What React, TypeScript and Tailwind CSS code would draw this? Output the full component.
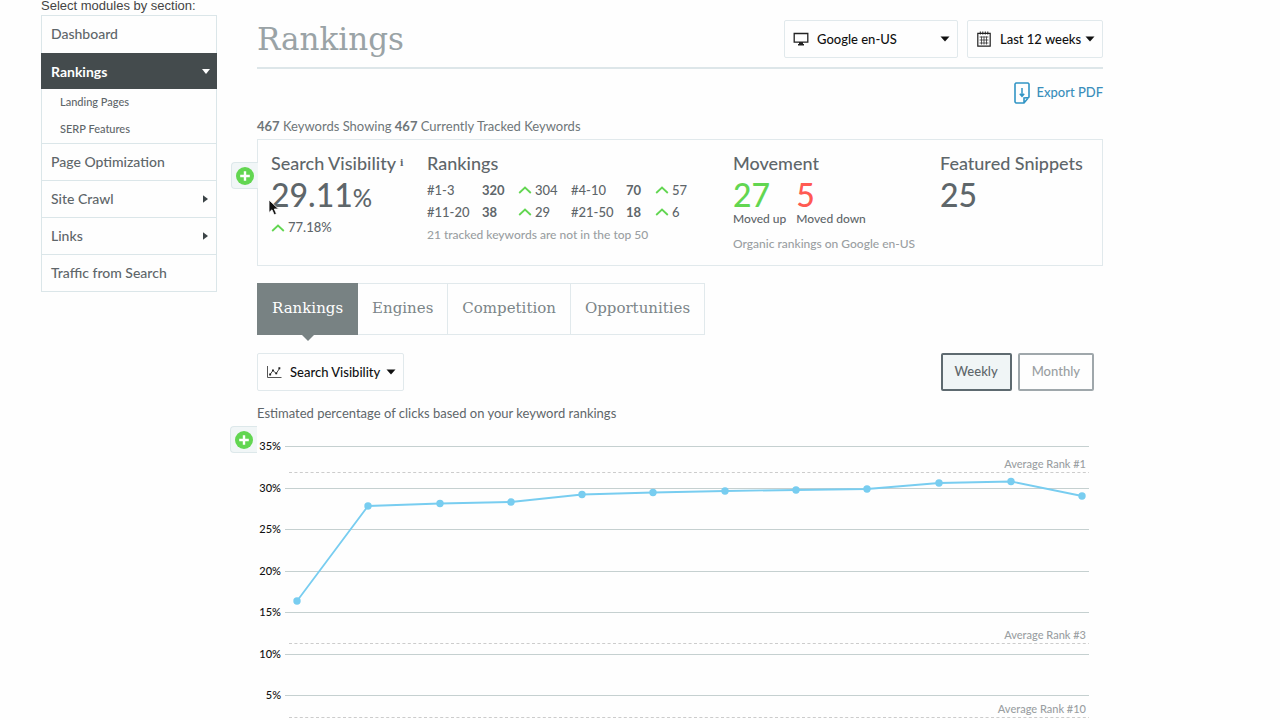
import type { ReactNode } from 'react';

const SLAB = "font-['Roboto_Slab','DejaVu_Serif',serif]";

const weeks = [
  [40, 171], [111, 76], [183, 73.5], [254, 72], [325, 64.5], [396, 62.5],
  [468, 61], [539, 60], [610, 59], [682, 53], [754, 51.5], [825, 66],
];

const gridLines = [
  { label: '35%', y: 17 },
  { label: '30%', y: 59 },
  { label: '25%', y: 100 },
  { label: '20%', y: 142 },
  { label: '15%', y: 183 },
  { label: '10%', y: 225 },
  { label: '5%', y: 266 },
];

const averages = [
  { label: 'Average Rank #1', y: 42 },
  { label: 'Average Rank #3', y: 213 },
  { label: 'Average Rank #10', y: 287 },
];

function Caret({ className = '' }: { className?: string }) {
  return (
    <svg viewBox="0 0 10 6" className={`h-[6px] w-[10px] ${className}`} aria-hidden="true">
      <path d="M0.5 0.5h9L5 5.5z" fill="#111" />
    </svg>
  );
}

function UpArrow() {
  return (
    <svg viewBox="0 0 14 8" className="h-2 w-[14px] shrink-0" aria-hidden="true">
      <path d="M1.2 7L7 1.6L12.8 7" fill="none" stroke="#62d651" strokeWidth="1.8" />
    </svg>
  );
}

function Change({ value }: { value: string }) {
  return (
    <span className="flex items-center gap-[3px]">
      <UpArrow />
      {value}
    </span>
  );
}

function AddModule({ className }: { className: string }) {
  return (
    <button
      type="button"
      aria-label="Add module"
      className={`absolute -left-[27px] flex h-[27px] w-[27px] items-center justify-center rounded-l-[4px] border border-r-0 border-[#dde8ea] bg-[#f1f6f7] ${className}`}
    >
      <svg viewBox="0 0 18 18" className="h-[18px] w-[18px]" aria-hidden="true">
        <circle cx="9" cy="9" r="9" fill="#62d651" />
        <path d="M9 4.2v9.6M4.2 9h9.6" stroke="#fff" strokeWidth="2.4" />
      </svg>
    </button>
  );
}

function Picker({ label, options, icon, className }: { label: string; options: string[]; icon: ReactNode; className: string }) {
  return (
    <div className={`relative h-[38px] ${className}`}>
      <select
        aria-label={label}
        className="h-full w-full appearance-none rounded-[2px] border border-[#e1e9ec] bg-[#fefefe] pt-[2px] pl-8 text-[13px] font-medium text-[#111]"
      >
        {options.map((o) => (
          <option key={o}>{o}</option>
        ))}
      </select>
      <span className="pointer-events-none absolute inset-y-0 left-[9px] flex items-center">{icon}</span>
      <span className="pointer-events-none absolute inset-y-0 right-2 flex items-center">
        <Caret />
      </span>
    </div>
  );
}

function MonitorIcon() {
  return (
    <svg viewBox="0 0 16 14" className="h-[14px] w-4" aria-hidden="true">
      <path d="M1.2 1.5h13.6v8.6H1.2z" fill="none" stroke="#222" strokeWidth="1.3" />
      <path d="M6 10h4v2h1v1.6H5V12h1z" fill="#222" />
    </svg>
  );
}

function CalendarIcon() {
  return (
    <svg viewBox="0 0 16 16" className="h-4 w-4" aria-hidden="true">
      <path d="M1.8 2.3h12.4v12.9H1.8z" fill="none" stroke="#222" strokeWidth="1.2" />
      <path d="M4.3 0.5v3M6.8 0.5v3M9.3 0.5v3M11.8 0.5v3" stroke="#222" strokeWidth="1" />
      <path d="M3.6 6h8.8M3.6 9h8.8M3.6 12h8.8M5.5 5.5v8M8 5.5v8M10.5 5.5v8" stroke="#333" strokeWidth="0.8" />
    </svg>
  );
}

function ScatterIcon() {
  return (
    <svg viewBox="0 0 16 14" className="h-[14px] w-4" aria-hidden="true">
      <path d="M1.5 1v11.5H15.5" fill="none" stroke="#555" strokeWidth="1" />
      <path d="M4 9.5l3-4 3.2 3 3.3-5" fill="none" stroke="#333" strokeWidth="0.9" />
      <path d="M3.2 8.6h1.9v1.9H3.2zM6 4.4h1.9v1.9H6zM9.3 7.4h1.9v1.9H9.3zM12.4 2.3h1.9v1.9h-1.9z" fill="#222" />
    </svg>
  );
}

function Sidebar() {
  const row = 'flex h-[37px] items-center justify-between border-t border-[#dbe6e9] px-[9px] pb-px text-[14px] font-medium text-[#5e666a]';
  const right = (
    <svg viewBox="0 0 5 8" className="mr-[-1px] h-2 w-[5px]" aria-hidden="true">
      <path d="M0 0.3L5 4L0 7.7z" fill="#3c4447" />
    </svg>
  );
  return (
    <aside className="w-44 shrink-0">
      <p className="mb-[3px] font-['Liberation_Sans',sans-serif] text-[13px] leading-3 whitespace-nowrap text-[#444]">Select modules by section:</p>
      <nav className="border-x border-b border-[#dbe6e9]">
        <a href="#dashboard" className={row}>Dashboard</a>
        <a href="#rankings" className="-mx-px mt-px flex h-9 items-center justify-between bg-[#444b4d] px-[10px] text-[14px] font-bold text-white">
          Rankings
          <svg viewBox="0 0 8 5" className="mr-[-3px] h-[5px] w-2" aria-hidden="true">
            <path d="M0 0h8L4 5z" fill="#fff" />
          </svg>
        </a>
        <div className="flex flex-col pb-px text-[11px] leading-[27px] font-medium text-[#5e666a]">
          <a href="#landing" className="-mt-px px-[18px]">Landing Pages</a>
          <a href="#serp" className="px-[18px]">SERP Features</a>
        </div>
        <a href="#optimization" className={row}>Page Optimization</a>
        <a href="#crawl" className={row}>Site Crawl{right}</a>
        <a href="#links" className={row}>Links{right}</a>
        <a href="#traffic" className={row}>Traffic from Search</a>
      </nav>
    </aside>
  );
}

function Summary() {
  const heading = 'text-[18px] leading-6 font-medium';
  const figure = 'mt-[2px] text-[32px] leading-9 font-medium';
  return (
    <section className="relative mt-[3px] h-[127px] border border-[#e1e9ec]">
      <AddModule className="top-[22px]" />
      <div className="grid grid-cols-[156fr_306fr_207fr_149fr] px-[13px] pt-[11px] text-[13px] font-medium text-[#5e666a] whitespace-nowrap">
        <div className="relative min-w-0">
          <h2 className={heading}>
            Search Visibility
            <sup className="ml-1 font-['DejaVu_Serif',serif] text-[9px] font-bold">i</sup>
          </h2>
          <p className={figure}>29.11<span className="text-[24px]">%</span></p>
          <p className="mt-[2px] flex h-5 items-center"><Change value="77.18%" /></p>
          <svg viewBox="0 0 12 18" className="absolute top-12 -left-[3px] h-[18px] w-3" aria-hidden="true">
            <path d="M1 1v12.5l3-2.7 2.2 5 2.2-1-2.1-4.8h4.2z" fill="#111" stroke="#fff" strokeWidth="0.8" />
          </svg>
        </div>
        <div className="min-w-0">
          <h2 className={heading}>Rankings</h2>
          <table className="mt-1 w-[271px] table-fixed text-left">
            <colgroup>
              <col className="w-[55px]" /><col className="w-9" /><col className="w-[53px]" />
              <col className="w-[55px]" /><col className="w-[29px]" /><col className="w-[43px]" />
            </colgroup>
            <tbody className="leading-[22px]">
              <tr className="h-[22px]">
                <td>#1-3</td><td className="font-bold">320</td><td><Change value="304" /></td>
                <td>#4-10</td><td className="font-bold">70</td><td><Change value="57" /></td>
              </tr>
              <tr className="h-[22px]">
                <td>#11-20</td><td className="font-bold">38</td><td><Change value="29" /></td>
                <td>#21-50</td><td className="font-bold">18</td><td><Change value="6" /></td>
              </tr>
            </tbody>
          </table>
          <p className="text-[12px] leading-6 text-[#9a9fa2]">21 tracked keywords are not in the top 50</p>
        </div>
        <div className="min-w-0 text-[12px]">
          <h2 className={heading}>Movement</h2>
          <div className="flex gap-[10px]">
            <div>
              <p className={`${figure} text-[#62d651]`}>27</p>
              <p className="leading-3">Moved up</p>
            </div>
            <div>
              <p className={`${figure} text-[#ff5a52]`}>5</p>
              <p className="leading-3">Moved down</p>
            </div>
          </div>
          <p className="mt-[9px] leading-5 text-[#9a9fa2]">Organic rankings on Google en-US</p>
        </div>
        <div className="min-w-0">
          <h2 className={heading}>Featured Snippets</h2>
          <p className={figure}>25</p>
        </div>
      </div>
    </section>
  );
}

function Tabs() {
  const tab = 'h-[52px] border border-l-0 border-[#e1e9ec] px-[14px] pb-[2px] text-[#7b8588]';
  return (
    <div role="tablist" className={`mt-[17px] flex text-[15px] ${SLAB}`}>
      <button type="button" role="tab" aria-selected="true" className="relative h-[52px] bg-[#788283] px-[15px] pb-[2px] text-white">
        Rankings
        <svg viewBox="0 0 12 6" className="absolute top-full left-1/2 -ml-[6px] h-[6px] w-3" aria-hidden="true">
          <path d="M0 0h12L6 6z" fill="#788283" />
        </svg>
      </button>
      <button type="button" role="tab" aria-selected="false" className={tab}>Engines</button>
      <button type="button" role="tab" aria-selected="false" className={tab}>Competition</button>
      <button type="button" role="tab" aria-selected="false" className={tab}>Opportunities</button>
    </div>
  );
}

function VisibilityChart() {
  return (
    <div className="relative mt-[7px]">
      <AddModule className="-top-1" />
      <svg viewBox="0 0 846 310" role="img" aria-label="Search visibility by week" className="block w-full font-['Lato',sans-serif] text-[11px] font-medium">
        {gridLines.map((g) => (
          <g key={g.label}>
            <text x="24" y={g.y + 3} textAnchor="end" fill="#111">{g.label}</text>
            <path d={`M28 ${g.y - 0.5}H832`} stroke="#c5d0d0" />
          </g>
        ))}
        {averages.map((a) => (
          <g key={a.label}>
            <text x="829" y={a.y - 4} textAnchor="end" fill="#9a9fa2">{a.label}</text>
            <path d={`M32 ${a.y + 0.5}H832`} stroke="#ccc" strokeDasharray="3 2.4" />
          </g>
        ))}
        <polyline points={weeks.map((p) => p.join(',')).join(' ')} fill="none" stroke="#78cdf0" strokeWidth="1.8" />
        {weeks.map(([x, y]) => (
          <circle key={x} cx={x} cy={y} r="3.7" fill="#78cdf0" />
        ))}
      </svg>
    </div>
  );
}

export default function App() {
  return (
    <div className="flex h-screen gap-10 overflow-hidden bg-[#fefefe] pr-[177px] pl-[41px] font-['Lato',sans-serif]">
      <Sidebar />
      <main className="min-w-0 flex-1">
        <header className="flex h-[69px] items-center justify-between border-b-2 border-[#dde6e9] pt-[10px]">
          <h1 className={`pt-[2px] text-[31px] font-light text-[#9aa3a6] ${SLAB}`}>Rankings</h1>
          <div className="flex gap-[9px]">
            <Picker label="Search engine" options={['Google en-US', 'Bing en-US']} icon={<MonitorIcon />} className="w-[174px]" />
            <Picker label="Date range" options={['Last 12 weeks', 'Last 12 months']} icon={<CalendarIcon />} className="w-[136px]" />
          </div>
        </header>
        <div className="mt-[13px] flex justify-end">
          <a href="#export" className="flex items-center gap-[6px] text-[13px] font-medium text-[#3a8ebb]">
            <svg viewBox="0 0 16 22" className="h-[22px] w-4" aria-hidden="true">
              <path d="M2 1h12l1 1v13l-5 6H2l-1-1V2zM15 15.5l-5 0.5v5" fill="none" stroke="#3295c5" strokeWidth="1.6" />
              <path d="M8 6v8.5M5.8 11.8L8 14.3l2.2-2.5" fill="none" stroke="#3295c5" strokeWidth="1.5" />
            </svg>
            Export PDF
          </a>
        </div>
        <p className="mt-3 text-[13px] leading-5 text-[#6f7679]">
          <b>467</b> Keywords Showing <b>467</b> Currently Tracked Keywords
        </p>
        <Summary />
        <Tabs />
        <div className="mt-[18px] flex items-center justify-between pr-[9px]">
          <Picker label="Metric" options={['Search Visibility', 'Average Rank']} icon={<ScatterIcon />} className="w-[147px]" />
          <div className="flex gap-[6px] text-[13px] font-medium">
            <button type="button" aria-pressed="true" className="h-[38px] rounded-[2px] border-2 border-[#5e6a70] bg-[#f0f5f6] px-3 text-[#5e666a]">Weekly</button>
            <button type="button" aria-pressed="false" className="h-[38px] rounded-[2px] border-2 border-[#9fa7ab] px-3 text-[#9a9fa2]">Monthly</button>
          </div>
        </div>
        <p className="mt-3 text-[13px] leading-5 text-[#5e666a]">Estimated percentage of clicks based on your keyword rankings</p>
        <VisibilityChart />
      </main>
    </div>
  );
}
